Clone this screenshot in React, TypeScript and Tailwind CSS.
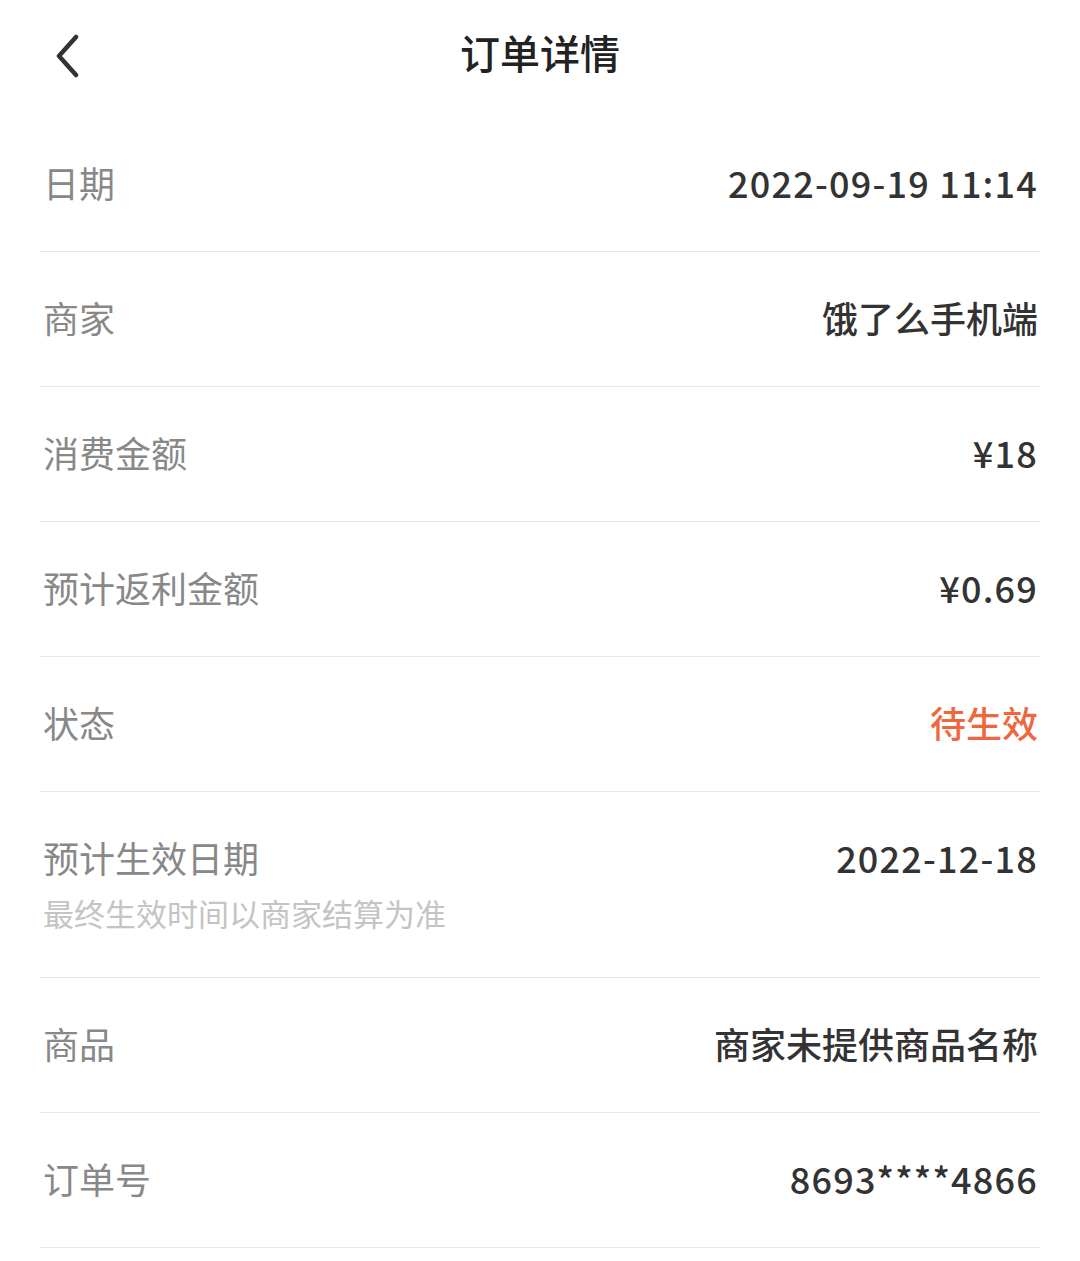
const rows: { label: string; value: string; red?: boolean; num?: boolean; note?: string }[] = [
  { label: "日期", value: "2022-09-19 11:14", num: true },
  { label: "商家", value: "饿了么手机端" },
  { label: "消费金额", value: "¥18", num: true },
  { label: "预计返利金额", value: "¥0.69", num: true },
  { label: "状态", value: "待生效", red: true },
  { label: "预计生效日期", value: "2022-12-18", num: true, note: "最终生效时间以商家结算为准" },
  { label: "商品", value: "商家未提供商品名称" },
  { label: "订单号", value: "8693****4866", num: true },
];

function Value({ r }: { r: (typeof rows)[number] }) {
  return (
    <div
      className={
        "pr-[2px] text-[36px] font-medium leading-[36px] " +
        (r.red ? "text-[#f0673f]" : "text-[#333]") +
        (r.num ? " tracking-[1.2px]" : "")
      }
    >
      {r.value}
    </div>
  );
}

export default function App() {
  return (
    <div
      className="min-h-screen w-[1080px] bg-white"
      style={{ fontFamily: '"Noto Sans CJK SC", "Noto Sans", sans-serif' }}
    >
      <header className="relative flex h-[117px] items-start justify-center pt-[27px]">
        <button className="absolute left-[47px] top-[28px] p-1">
          <svg width="34" height="46" viewBox="0 0 34 46" fill="none">
            <path
              d="M25 5 L8 24 L25 43"
              stroke="#333"
              strokeWidth="4.5"
              strokeLinecap="round"
              strokeLinejoin="round"
            />
          </svg>
        </button>
        <h1 className="text-[40px] font-medium leading-[50px] text-[#222]">订单详情</h1>
      </header>

      <div className="px-[40px]">
        {rows.map((r) =>
          r.note ? (
            <div
              key={r.label}
              className="flex justify-between border-b border-[#e6e6e6] pt-[47px] pb-[49px]"
            >
              <div className="pl-[3px]">
                <div className="text-[36px] leading-[36px] text-[#888]">{r.label}</div>
                <div className="mt-[22px] text-[31px] leading-[31px] text-[#c4c4c4]">{r.note}</div>
              </div>
              <Value r={r} />
            </div>
          ) : (
            <div
              key={r.label}
              className="flex h-[135px] items-center justify-between border-b border-[#e6e6e6] pb-[5px]"
            >
              <div className="pl-[3px] text-[36px] leading-[36px] text-[#888]">{r.label}</div>
              <Value r={r} />
            </div>
          )
        )}
      </div>
    </div>
  );
}
